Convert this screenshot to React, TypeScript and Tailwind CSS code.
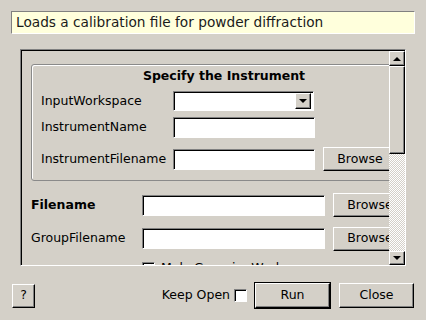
import React from 'react';

const raised =
  'border border-t-white border-l-white border-b-black border-r-black shadow-[inset_-1px_-1px_0_#808080] bg-[#d4d0c8]';
const sunken =
  'border border-t-[#808080] border-l-[#808080] border-b-white border-r-white shadow-[inset_1px_1px_0_#000] bg-white';

function Field({ w }: { w: string }) {
  return <div className={`h-[21px] shrink-0 ${w} ${sunken}`} />;
}

function Browse() {
  return (
    <div className={`ml-[8px] w-[74px] h-[24px] shrink-0 flex items-center justify-center ${raised}`}>
      Browse
    </div>
  );
}

function ArrowUp() {
  return <div className="w-0 h-0 border-l-[4px] border-r-[4px] border-b-[4px] border-l-transparent border-r-transparent border-b-black" />;
}

function ArrowDown() {
  return <div className="w-0 h-0 border-l-[4px] border-r-[4px] border-t-[4px] border-l-transparent border-r-transparent border-t-black" />;
}

function ScrollBar() {
  return (
    <div className="w-[16px] h-full shrink-0 flex flex-col">
      <div className={`h-[15px] w-full flex items-center justify-center ${raised}`}>
        <ArrowUp />
      </div>
      <div className={`h-[88px] w-full ${raised}`} />
      <div className="flex-1 bg-[repeating-conic-gradient(#ffffff_0_25%,#d4d0c8_0_50%)] bg-[length:2px_2px]" />
      <div className={`h-[14px] w-full flex items-center justify-center ${raised}`}>
        <ArrowDown />
      </div>
    </div>
  );
}

export default function App() {
  return (
    <div className="w-[426px] h-[320px] bg-[#d4d0c8] overflow-hidden flex flex-col text-[12.5px] text-black font-['DejaVu_Sans',sans-serif]">
      {/* description */}
      <div className="mx-[11px] mt-[11px] h-[23px] shrink-0 bg-[#ffffdc] border border-t-[#808080] border-l-[#808080] border-b-white border-r-white flex items-center pl-[4px] text-[13.7px] text-[#1a1a1a]">
        Loads a calibration file for powder diffraction
      </div>

      {/* scroll area */}
      <div className="ml-[20px] mt-[15px] w-[386px] h-[217px] shrink-0 flex border border-t-[#808080] border-l-[#808080] border-b-white border-r-white shadow-[inset_1px_1px_0_#000] pt-[1px] pl-[1px]">
        <div className="flex-1 overflow-hidden">
          <div className="w-[420px] pl-[9px] pt-[13px] flex flex-col">
            {/* group box */}
            <div className="w-[386px] h-[117px] shrink-0 border border-[#8a8a8a] rounded-[3px] shadow-[inset_1px_1px_0_#fff] flex flex-col pl-[9px]">
              <div className="h-[22px] pt-[1px] flex items-center justify-center font-bold pr-[9px]">
                Specify the Instrument
              </div>
              <div className="h-[26px] mt-[1px] flex items-center">
                <div className="w-[132px] shrink-0">InputWorkspace</div>
                <div className={`h-[20px] w-[141px] shrink-0 flex items-center justify-end pr-[2px] ${sunken}`}>
                  <div className={`w-[16px] h-[16px] flex items-center justify-center ${raised}`}>
                    <ArrowDown />
                  </div>
                </div>
              </div>
              <div className="h-[26px] flex items-center">
                <div className="w-[132px] shrink-0">InstrumentName</div>
                <Field w="w-[142px]" />
              </div>
              <div className="h-[30px] mt-[4px] flex items-center">
                <div className="w-[132px] shrink-0">InstrumentFilename</div>
                <Field w="w-[142px]" />
                <Browse />
              </div>
            </div>

            <div className="h-[26px] mt-[11px] flex items-center">
              <div className="w-[111px] shrink-0 font-bold">Filename</div>
              <Field w="w-[183px]" />
              <Browse />
            </div>
            <div className="h-[27px] mt-[7px] flex items-center">
              <div className="w-[111px] shrink-0">GroupFilename</div>
              <Field w="w-[183px]" />
              <Browse />
            </div>
            <div className="h-[20px] mt-[6px] flex items-center pl-[111px]">
              <div className={`w-[13px] h-[13px] shrink-0 flex items-center justify-center ${sunken}`}>
                <svg width="9" height="9" viewBox="0 0 9 9">
                  <path d="M1 4 L3.5 6.5 L8 1.5" stroke="#000" strokeWidth="2" fill="none" />
                </svg>
              </div>
              <div className="ml-[6px]">MakeGroupingWorkspace</div>
            </div>
          </div>
        </div>
        <ScrollBar />
      </div>

      {/* bottom bar */}
      <div className="mt-[16px] h-[27px] flex items-center pl-[12px] pr-[12px]">
        <div className={`w-[23px] h-[24px] flex items-center justify-center ${raised}`}>?</div>
        <div className="flex-1" />
        <div>Keep Open</div>
        <div className={`ml-[4px] w-[13px] h-[13px] ${sunken}`} />
        <div className="ml-[7px] border border-black">
          <div className={`w-[75px] h-[25px] flex items-center justify-center ${raised}`}>Run</div>
        </div>
        <div className={`ml-[8px] w-[75px] h-[25px] flex items-center justify-center ${raised}`}>Close</div>
      </div>
    </div>
  );
}
